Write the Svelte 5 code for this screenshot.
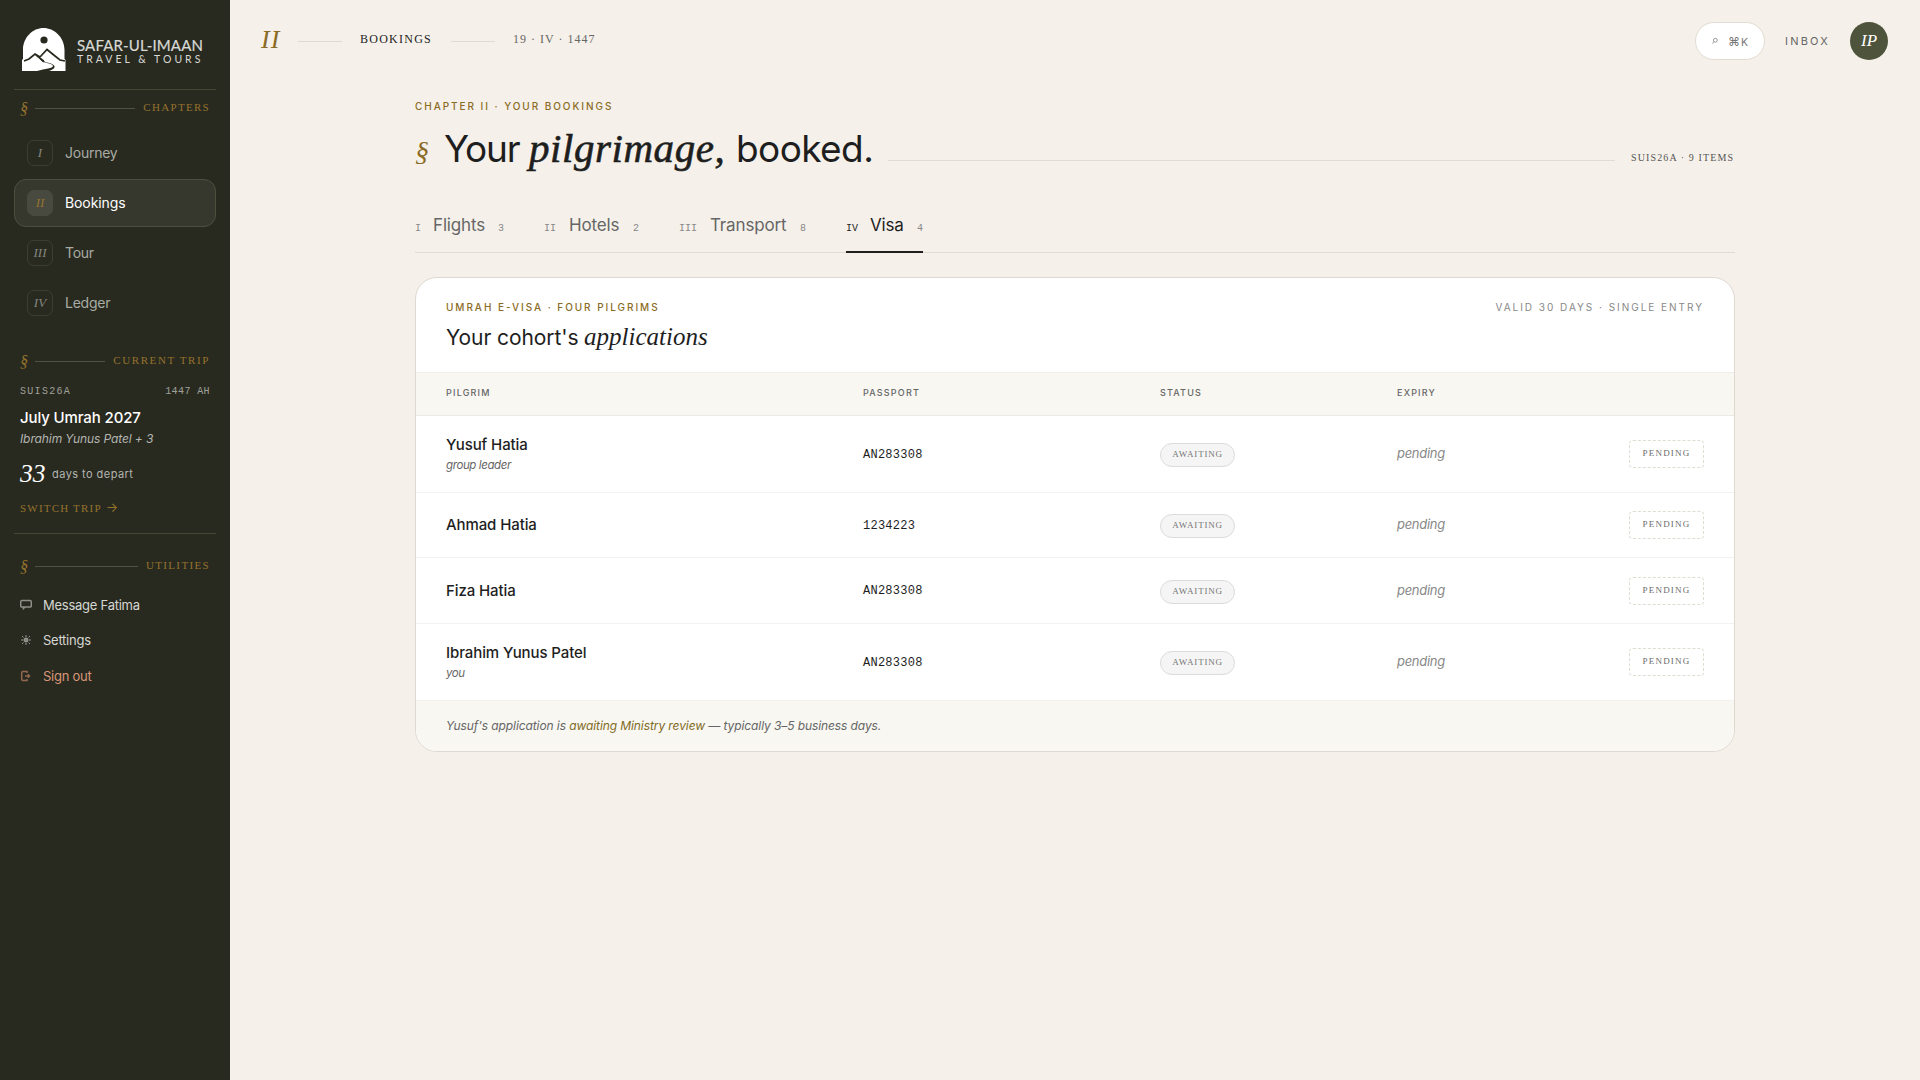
<script lang="ts">
  const chapters = [
    { num: 'I', label: 'Journey' },
    { num: 'II', label: 'Bookings', active: true },
    { num: 'III', label: 'Tour' },
    { num: 'IV', label: 'Ledger' },
  ];
  const tabs = [
    { num: 'I', label: 'Flights', count: 3, cls: 'flights' },
    { num: 'II', label: 'Hotels', count: 2, cls: 'hotels' },
    { num: 'III', label: 'Transport', count: 8, cls: 'transport' },
    { num: 'IV', label: 'Visa', count: 4, cls: 'visa' },
  ];
  const pilgrims = [
    { name: 'Yusuf Hatia', note: 'group leader', passport: 'AN283308' },
    { name: 'Ahmad Hatia', note: '', passport: '1234223' },
    { name: 'Fiza Hatia', note: '', passport: 'AN283308' },
    { name: 'Ibrahim Yunus Patel', note: 'you', passport: 'AN283308' },
  ];
</script>

{#snippet section(title: string, cls: string)}
  <div class="section {cls}">
    <span class="mark">§</span><i class="rule"></i><span class="section-title">{title}</span>
  </div>
{/snippet}

<div class="app">
  <aside>
    <div class="brand">
      <svg width="44" height="44" viewBox="0 0 44 44">
        <path d="M0 43V32L1 31V22C1 9 11 0 21.500 0S42.500 9 42.500 22V31L43.500 32V43Z" fill="#fff" />
        <circle cx="22" cy="12" r="3.600" fill="#282a20" />
        <path d="M2 33L7 31L13 26L18 29L25 21.500L33 28L38 32L43 33M13 26L19 31L22 34" fill="none" stroke="#282a20" stroke-width="1.700" />
        <path d="M18 30.500C19 36 31 34.500 31 38C31 40.500 23 40.500 15 43H27C33 41 35 38 29 35.500C25 34.200 21.500 34.500 22 32Z" fill="#282a20" />
      </svg>
      <div class="wordmark"><b>SAFAR-UL-IMAAN</b><span>TRAVEL &amp; TOURS</span></div>
    </div>
    {@render section('CHAPTERS', 'chapters')}
    <nav>
      {#each chapters as c}
        <a class:active={c.active}><span class="badge">{c.num}</span><span class="label">{c.label}</span></a>
      {/each}
    </nav>
    {@render section('CURRENT TRIP', 'current')}
    <div class="trip">
      <div class="codes"><span class="code">SUIS26A</span><span class="year">1447 AH</span></div>
      <div class="trip-name">July Umrah 2027</div>
      <div class="party">Ibrahim Yunus Patel + 3</div>
      <div class="countdown"><span class="days">33</span><span class="depart">days to depart</span></div>
      <div class="switch">SWITCH TRIP <span class="arrow">→</span></div>
    </div>
    {@render section('UTILITIES', 'utilities')}
    <div class="utils">
      <a>
        <svg width="12" height="12" viewBox="0 0 12 12"><path d="M2 1.500H10Q11.300 1.500 11.300 3V6.500Q11.300 8 10 8H5L3.500 9.500V8H2Q.7 8 .7 6.500V3Q.7 1.500 2 1.500Z" fill="none" stroke="#8f8f88" stroke-width="1.500" /></svg>
        <span>Message Fatima</span>
      </a>
      <a>
        <svg width="12" height="12" viewBox="0 0 12 12"><circle cx="6" cy="6" r="2" fill="#85857d" stroke="#a5a59d" /><path d="M6 1V3M6 9V11M1 6H3M9 6H11M2 2L3.500 3.500M8.500 8.500L10 10M10 2L8.500 3.500M2 10L3.500 8.500" stroke="#96968e" /></svg>
        <span>Settings</span>
      </a>
      <a class="signout">
        <svg width="12" height="12" viewBox="0 0 12 12"><path d="M7 3V1.500H3Q1.700 1.500 1.700 3V9Q1.700 10.500 3 10.500H7V9M5 6H9.500M7.800 4.200L9.600 6L7.800 7.800" fill="none" stroke="#94674f" stroke-width="1.500" /></svg>
        <span>Sign out</span>
      </a>
    </div>
  </aside>

  <main>
    <header>
      <span class="chapter">II</span><i class="dash"></i><span class="crumb">BOOKINGS</span><i class="dash"></i><span class="date">19 · IV · 1447</span>
      <div class="actions">
        <div class="search">
          <svg width="8" height="10" viewBox="0 0 8 10"><circle cx="4.500" cy="4" r="2.600" fill="none" stroke="#777" /><path d="M2.500 6L.6 8.500" stroke="#777" /></svg>
          <span class="key"><span class="cmd">⌘</span>K</span>
        </div>
        <span class="inbox">INBOX</span>
        <div class="avatar">IP</div>
      </div>
    </header>

    <div class="content">
      <div class="eyebrow">CHAPTER II · YOUR BOOKINGS</div>
      <div class="title-row">
        <span class="title-mark">§</span>
        <h1><span class="t1">Your</span><em>pilgrimage,</em><span class="t3">booked.</span></h1>
        <i class="rule"></i>
        <span class="items">SUIS26A · 9 ITEMS</span>
      </div>
      <div class="tabs">
        {#each tabs as t, i}
          <div class="tab {t.cls}" class:on={i === 3}><span class="n">{t.num}</span><span class="l">{t.label}</span><span class="c">{t.count}</span></div>
        {/each}
      </div>

      <section class="card">
        <div class="card-head">
          <div>
            <div class="card-eyebrow">UMRAH E-VISA · FOUR PILGRIMS</div>
            <h2><span>Your cohort's</span><em>applications</em></h2>
          </div>
          <span class="valid">VALID 30 DAYS · SINGLE ENTRY</span>
        </div>
        <div class="row labels"><span>PILGRIM</span><span>PASSPORT</span><span>STATUS</span><span>EXPIRY</span><span></span></div>
        {#each pilgrims as p, i}
          <div class="row pilgrim" class:tall={p.note} class:third={i === 2}>
            <div class="who"><div class="name">{p.name}</div>{#if p.note}<div class="note">{p.note}</div>{/if}</div>
            <span class="passport">{p.passport}</span>
            <span class="status">AWAITING</span>
            <span class="expiry">pending</span>
            <span class="action">PENDING</span>
          </div>
        {/each}
        <div class="foot">Yusuf's application is <b>awaiting Ministry review</b> — typically 3–5 business days.</div>
      </section>
    </div>
  </main>
</div>

<style>
  :global(body) { margin: 0; }
  .app {
    --sans: Inter, 'Liberation Sans', sans-serif;
    --serif: 'Liberation Serif', serif;
    --mono: 'Liberation Mono', monospace;
    --gold: #8b6b25;
    display: flex; width: 1920px; height: 1080px; overflow: hidden;
    background: #f5f1ea; color: #1e1e1e; font-family: var(--sans);
  }
  .app * { box-sizing: border-box; white-space: nowrap; }
  aside { --gold: #96722c; width: 230px; flex: none; padding: 0 14px; background: #282a20; }
  .brand { height: 90px; padding: 28px 0 0 8px; display: flex; gap: 12px; border-bottom: 1px solid #444733; }
  .brand svg { flex: none; }
  .wordmark { display: flex; flex-direction: column; padding-top: 9px; margin-left: -1px; font-family: Lato, sans-serif; color: #d9d9d5; }
  .wordmark b { font-weight: 400; font-size: 15px; line-height: 17px; letter-spacing: .15px; -webkit-text-stroke: .2px #d9d9d5; }
  .wordmark span { font-size: 10.5px; line-height: 11px; letter-spacing: 3px; }

  .section { display: flex; align-items: center; height: 20px; padding: 0 6px; font-family: var(--serif); color: var(--gold); }
  .mark { width: 15px; padding-top: 2px; font-size: 16px; line-height: 20px; font-style: italic; }
  .rule { flex: 1; height: 1px; background: #505246; }
  .section-title { margin-left: 8px; font-size: 11px; line-height: 18px; padding-bottom: 3px; }
  .chapters { margin-top: 8px; }
  .chapters .section-title { letter-spacing: 1.300px; }
  .current { margin-top: 24px; }
  .current .section-title { letter-spacing: 1.600px; }
  .utilities { margin-top: 22px; }
  .utilities .section-title { letter-spacing: 1.350px; }
  nav { display: flex; flex-direction: column; gap: 2px; margin-top: 11px; }
  nav a { display: flex; align-items: center; gap: 12px; height: 48px; padding: 0 12px; border: 1px solid transparent; border-radius: 12px; font-size: 14px; color: #a9aaa4; }
  nav a.active { background: #36382e; border-color: #4c4f3e; color: #fff; }
  .label { padding-bottom: 2px; letter-spacing: -.25px; }
  .badge { display: grid; place-items: center; width: 26px; height: 26px; border: 1px solid #3c3f30; border-radius: 7px; font: italic 13px var(--serif); color: #85867f; }
  .active .badge { background: #484a3f; border-color: #484a3f; color: var(--gold); }
  .active .label { letter-spacing: -.1px; }

  .trip { height: 163px; padding: 12px 6px 0; border-bottom: 1px solid #444733; }
  .codes { display: flex; justify-content: space-between; font: 10px/18px var(--mono); color: #a0a09a; }
  .code { letter-spacing: 1.300px; }
  .year { letter-spacing: .4px; }
  .trip-name { margin-top: 7px; font-size: 15px; line-height: 20px; letter-spacing: -.12px; font-weight: 500; color: #fff; }
  .party { font-size: 12px; line-height: 22px; letter-spacing: -.1px; font-style: italic; color: #b4b5b0; }
  .countdown { display: flex; align-items: center; height: 30px; margin-top: 9px; }
  .days { width: 32px; font: italic 25.5px/30px var(--serif); color: #fff; }
  .depart { font-size: 11px; letter-spacing: .45px; color: #b4b5b0; }
  .switch { display: flex; margin-top: 7px; font: 11px/24px var(--serif); letter-spacing: 1.200px; color: var(--gold); }
  .arrow { margin-left: 4px; font: 13px/23px var(--sans); letter-spacing: 0; }
  .utils { display: flex; flex-direction: column; margin-top: 11px; }
  .utils a { display: flex; align-items: center; gap: 11px; height: 35.5px; padding-left: 6px; font-size: 13px; color: #d6d7d2; letter-spacing: -.25px; }
  .utils .signout { color: #d99777; }

  main { flex: 1; min-width: 0; }
  header { display: flex; align-items: center; height: 82px; padding: 0 32px 0 31px; }
  .chapter { width: 37px; padding-bottom: 3px; font: italic 26px/30px var(--serif); color: var(--gold); letter-spacing: 1px; }
  .dash { width: 44px; height: 1px; background: #dfdbd2; }
  .crumb { width: 90px; padding: 0 0 4px 18px; margin-right: 19px; font: 12px/14px var(--serif); letter-spacing: 1.250px; }
  .date { margin-left: 18px; padding-bottom: 4px; font: 12px/14px var(--serif); letter-spacing: 1px; color: #666; }
  .actions { display: flex; align-items: center; margin-left: auto; }
  .search { display: flex; align-items: center; gap: 10px; width: 70px; height: 38px; padding: 0 16px; border: 1px solid #e2ddd4; border-radius: 19px; background: #fff; font-size: 10.5px; color: #777; }
  .cmd { font-size: 12px; margin-right: 1px; }
  .inbox { width: 45px; margin: 0 20px; font-size: 11px; letter-spacing: 2.200px; color: #666; }
  .avatar { display: grid; place-items: center; width: 38px; height: 38px; border-radius: 50%; background: #4e533c; font: italic 17px var(--serif); color: #fff; }

  .content { width: 1320px; margin: 0 0 0 185px; padding-top: 16px; }
  .eyebrow { font-size: 10px; line-height: 16px; font-weight: 500; letter-spacing: 1.950px; color: var(--gold); }
  .title-row { display: flex; align-items: center; height: 76px; margin-top: -4px; }
  .title-mark { width: 29px; padding-top: 8px; font: italic 28px/30px var(--serif); color: var(--gold); }
  h1 { display: flex; align-items: baseline; width: 444px; margin: 0; font-size: 37px; line-height: 50px; font-weight: 400; }
  .t1 { width: 85px; letter-spacing: -1.200px; }
  h1 em { width: 207px; font: italic 41px/50px var(--serif); letter-spacing: .55px; -webkit-text-stroke: .6px #1e1e1e; }
  .t3 { letter-spacing: -.6px; }
  .title-row .rule { margin-top: 25px; background: #dfdcd4; }
  .items { width: 104px; margin: 20px 0 0 16px; font: 10px/14px var(--serif); letter-spacing: 1.120px; color: #555; }
  .tabs { display: flex; gap: 40px; height: 67px; border-bottom: 1px solid #dfdcd4; padding-top: 27px; }
  .tab { display: flex; align-items: baseline; height: 40px; line-height: 24px; }
  .n, .c { font-family: var(--mono); font-size: 10px; color: #888; }
  .l { font-size: 17px; letter-spacing: -.15px; color: #666; }
  .tab.on { border-bottom: 2px solid #1e1e1e; }
  .on .n, .on .l { color: #1e1e1e; }
  .c { margin-left: auto; }
  .flights { width: 89px; } .flights .n { width: 18px; }
  .hotels { width: 95px; } .hotels .n { width: 25px; }
  .transport { width: 127px; } .transport .n { width: 31px; }
  .visa { width: 77px; } .visa .n { width: 24px; }

  .card { margin-top: 24px; height: 475px; border: 1px solid #dedad2; border-radius: 22px; background: #fff; overflow: hidden; }
  .card-head { display: flex; justify-content: space-between; height: 95px; padding: 21px 30px 0; border-bottom: 1px solid #f0eee9; }
  .card-eyebrow { font-size: 10px; line-height: 16px; font-weight: 500; letter-spacing: 1.950px; color: var(--gold); }
  .valid { font-size: 10px; line-height: 16px; letter-spacing: 1.980px; color: #888; }
  h2 { display: flex; align-items: baseline; margin: 8px 0 0; font-size: 21px; line-height: 28px; font-weight: 400; }
  h2 span { width: 138px; letter-spacing: -.08px; }
  h2 em { font: italic 25px/28px var(--serif); }
  .row { display: grid; grid-template-columns: 417px 297px 237px 1fr auto; align-items: center; padding: 0 30px; border-bottom: 1px solid #f3f2f0; }
  .labels { height: 43px; padding-bottom: 3px; background: #f8f7f2; border-color: #eceae4; font-size: 9px; font-weight: 500; letter-spacing: 1.200px; color: #666; }
  .row.pilgrim { height: 65px; }
  .row.pilgrim.tall { height: 77px; }
  .row.pilgrim.third { height: 66px; }
  .name { font-size: 15px; line-height: 22px; font-weight: 500; letter-spacing: -.1px; }
  .note { font-size: 11.5px; line-height: 18px; letter-spacing: -.4px; font-style: italic; color: #666; }
  .tall .who { padding-bottom: 1px; }
  .passport { padding-top: 1px; font: 12px/16px var(--mono); letter-spacing: .25px; }
  .status { justify-self: start; width: 75px; height: 24px; margin-top: 2px; border: 1px solid #dcdcdc; border-radius: 12px; background: #f5f5f5; text-align: center; font: 9px/21px var(--serif); letter-spacing: .8px; color: #757575; }
  .expiry { padding-bottom: 2px; font-size: 13px; letter-spacing: -.3px; font-style: italic; color: #888; }
  .action { width: 75px; height: 28px; border: 1px dashed #dfdcd2; border-radius: 4px; text-align: center; font: 9px/24px var(--serif); letter-spacing: 1.200px; color: #6c6c6c; }
  .foot { height: 51px; padding: 0 30px; background: #f8f7f2; font-size: 12px; letter-spacing: -.09px; line-height: 49px; font-style: italic; color: #666; }
  .foot b { font-weight: 400; color: #826b25; }
</style>
